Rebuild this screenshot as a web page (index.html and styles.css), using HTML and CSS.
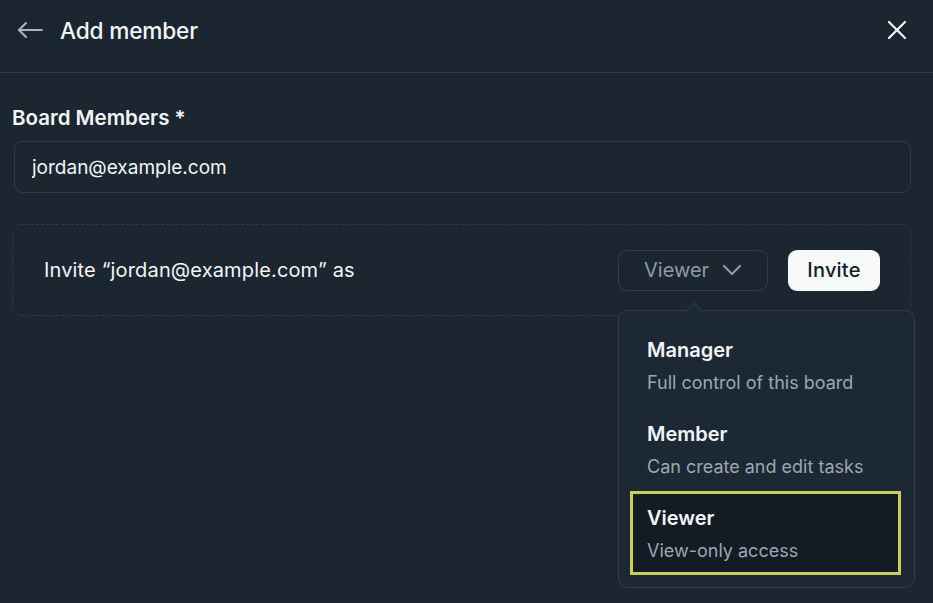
FILE: index.html
```html
<!DOCTYPE html>
<html lang="en">

<head>
    <meta charset="UTF-8">
    <meta name="viewport" content="width=device-width, initial-scale=1.0">
    <title>Add member</title>

    <link rel="stylesheet" href="styles.css">
</head>

<body>

    <header class="topbar">
        <button type="button" class="icon-btn back" aria-label="Back">
            <svg width="26" height="18" viewBox="0 0 26 18" fill="none" stroke="currentColor" stroke-width="2" stroke-linecap="round" stroke-linejoin="round">
                <path d="M25 9H2" />
                <path d="M9 2L2 9l7 7" />
            </svg>
        </button>
        <h1>Add member</h1>
        <button type="button" class="icon-btn close" aria-label="Close">
            <svg width="20" height="20" viewBox="0 0 20 20" fill="none" stroke="currentColor" stroke-width="2.2" stroke-linecap="round">
                <path d="M2 2l16 16" />
                <path d="M18 2L2 18" />
            </svg>
        </button>
    </header>

    <main class="content">
        <label for="members" class="field-label">Board Members *</label>
        <input type="text" id="members" class="field-input" value="jordan@example.com" />

        <div class="invite-box">
            <span class="invite-text">Invite &ldquo;jordan@example.com&rdquo; as</span>

            <div class="role-picker">
                <button type="button" class="role-select">
                    Viewer
                    <svg width="20" height="12" viewBox="0 0 20 12" fill="none" stroke="currentColor" stroke-width="2.2" stroke-linecap="round" stroke-linejoin="round">
                        <path d="M2 2l8 8 8-8" />
                    </svg>
                </button>

                <ul class="role-menu">
                    <li class="role-item">
                        <strong>Manager</strong>
                        <span>Full control of this board</span>
                    </li>
                    <li class="role-item">
                        <strong>Member</strong>
                        <span>Can create and edit tasks</span>
                    </li>
                    <li class="role-item selected">
                        <strong>Viewer</strong>
                        <span>View-only access</span>
                    </li>
                </ul>
            </div>

            <button type="button" class="invite-btn">Invite</button>
        </div>
    </main>

</body>

</html>
```

FILE: styles.css
```css
html {
    background-color: #1b2631;
}

body {
    margin: 0;
    min-height: 100vh;
    background-color: #1b2631;
    color: #f2f5f8;
    font-family: Inter, "Liberation Sans", sans-serif;
}

.topbar {
    display: flex;
    align-items: center;
    height: 60px;
    padding: 0 26px 12px 17px;
    border-bottom: 1px solid #2f3b47;
}

.topbar h1 {
    flex: 1;
    margin: 0 0 0 17px;
    font-size: 22.7px;
    font-weight: 500;
    letter-spacing: -0.2px;
}

.icon-btn {
    display: flex;
    padding: 0;
    background: none;
    border: none;
    cursor: pointer;
}

.back {
    color: #aab4be;
}

.close {
    color: #f2f5f8;
}

.content {
    padding: 33px 22px 0 12px;
}

.field-label {
    display: block;
    font-size: 20.5px;
    font-weight: 600;
    line-height: 24px;
}

.field-input {
    box-sizing: border-box;
    display: block;
    width: calc(100% - 2px);
    height: 52px;
    margin: 11px 0 0 2px;
    padding: 0 17px;
    background: transparent;
    border: 1px solid #303c48;
    border-radius: 9px;
    color: #f2f5f8;
    font-family: inherit;
    font-size: 19px;
    outline: none;
}

.invite-box {
    display: flex;
    align-items: center;
    height: 92px;
    margin-top: 31px;
    padding: 0 30px 0 31px;
    border: 1px dashed #2f3b47;
    border-radius: 9px;
    box-sizing: border-box;
}

.invite-text {
    flex: 1;
    font-size: 20px;
    letter-spacing: 0.15px;
}

.role-picker {
    position: relative;
    margin-right: 20px;
}

.role-select {
    display: flex;
    align-items: center;
    gap: 13px;
    width: 150px;
    height: 41px;
    padding: 0 0 0 25px;
    background: transparent;
    border: 1px solid #313d49;
    border-radius: 9px;
    color: #8e9ba8;
    font-family: inherit;
    font-size: 20px;
    cursor: pointer;
}

.role-menu {
    position: absolute;
    z-index: 2;
    top: 60px;
    left: 0;
    width: 297px;
    margin: 0;
    padding: 12px 13px 12px 11px;
    box-sizing: border-box;
    list-style: none;
    background: #1c2834;
    border: 1px solid #313d49;
    border-radius: 10px;
}

.role-menu::before {
    content: "";
    position: absolute;
    top: -6px;
    left: 69px;
    width: 11px;
    height: 11px;
    background: #1c2834;
    border-left: 1px solid #313d49;
    border-top: 1px solid #313d49;
    transform: rotate(45deg);
}

.role-item {
    display: flex;
    flex-direction: column;
    gap: 10px;
    height: 84px;
    padding: 15px 17px 0;
    box-sizing: border-box;
}

.role-item strong {
    font-size: 20px;
    font-weight: 600;
    line-height: 24px;
}

.role-item span {
    color: #9ca7b3;
    font-size: 18px;
    line-height: 22px;
}

.role-item.selected {
    padding: 12px 14px 0;
    background: #131b24;
    border: 3px solid #cbd04d;
}

.invite-btn {
    width: 92px;
    height: 41px;
    background: #f7f9fb;
    border: none;
    border-radius: 9px;
    color: #151d26;
    font-family: inherit;
    font-size: 20px;
    font-weight: 500;
    letter-spacing: 0.2px;
    cursor: pointer;
}
```
